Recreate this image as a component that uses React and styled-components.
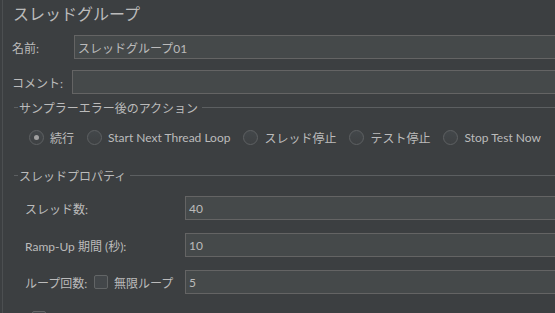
import React from 'react';
import styled, { createGlobalStyle } from 'styled-components';

const FONT = `Lato, "Noto Sans CJK JP", sans-serif`;

const Global = createGlobalStyle`
  html, body {
    margin: 0;
    padding: 0;
    background: #3c3f41;
    overflow: hidden;
  }
  body {
    font-family: ${FONT};
    color: #bbbbbb;
  }
`

const Page = styled.div`
  width: 555px;
  height: 313px;
  padding-left: 2px;
  box-sizing: border-box;
  overflow: hidden;
`
const Panel = styled.div`
  height: 100%;
  border-left: 1px solid #4c4f51;
  display: flex;
  flex-direction: column;
`
const Title = styled.h1`
  margin: 0;
  padding: 3px 0 0 10px;
  font-size: 16px;
  font-weight: 400;
  line-height: 22px;
  color: #bbbbbb;
`
const Row = styled.div`
  display: flex;
  align-items: center;
  height: 24px;
  margin-top: ${p => p.$top}px;
  padding-left: ${p => p.$left}px;
`
const Label = styled.label`
  width: ${p => p.$width}px;
  flex-shrink: 0;
  font-size: 12px;
  white-space: nowrap;
`
const Input = styled.input`
  flex: 1;
  height: 24px;
  margin-right: -20px;
  box-sizing: border-box;
  background: #45494a;
  border: 1px solid #646464;
  color: #bbbbbb;
  font-family: ${FONT};
  font-size: 12px;
  padding: 0 3px;
  outline: none;
`
const SectionHeader = styled.div`
  display: flex;
  align-items: center;
  height: 16px;
  margin-top: ${p => p.$top}px;
  padding-left: 11px;
  font-size: 12px;
  white-space: nowrap;
  &::before {
    content: "";
    width: 4px;
    height: 1px;
    background: #5c5f61;
    margin-right: 1px;
  }
  &::after {
    content: "";
    flex: 1;
    height: 1px;
    background: #5c5f61;
    margin-left: 4px;
  }
`
const RadioRow = styled.div`
  display: flex;
  align-items: center;
  height: 16px;
  margin-top: 14px;
  padding-left: 26px;
  gap: 13px;
  font-size: 12px;
  white-space: nowrap;
`
const RadioItem = styled.span`
  display: flex;
  align-items: center;
  gap: 6px;
`
const Circle = styled.span`
  width: 15px;
  height: 15px;
  box-sizing: border-box;
  border-radius: 50%;
  border: 1px solid #5e6163;
  background: linear-gradient(#43474a, #3e4143);
  display: flex;
  align-items: center;
  justify-content: center;
  &::after {
    content: "";
    width: 5px;
    height: 5px;
    border-radius: 50%;
    background: ${p => (p.$on ? '#a0a0a0' : 'transparent')};
  }
`
const Box = styled.span`
  width: 14px;
  height: 14px;
  box-sizing: border-box;
  border: 1px solid #626566;
  border-radius: 2px;
  background: #43474a;
  display: inline-flex;
  align-items: center;
  justify-content: center;
  flex-shrink: 0;
`
const CheckLabel = styled.span`
  display: flex;
  align-items: center;
  gap: 6px;
  font-size: 12px;
  white-space: nowrap;
`
const LoopLabel = styled.span`
  width: 69px;
  flex-shrink: 0;
  font-size: 12px;
  white-space: nowrap;
`
const LoopCheck = styled(CheckLabel)`
  width: 91px;
  flex-shrink: 0;
`

const options = [
  { text: '続行', on: true },
  { text: 'Start Next Thread Loop' },
  { text: 'スレッド停止' },
  { text: 'テスト停止' },
  { text: 'Stop Test Now' },
];

const Check = () => (
  <svg width="10" height="10" viewBox="0 0 10 10">
    <path d="M1.5 5.2 L4 7.6 L8.6 2" fill="none" stroke="#bbbbbb" strokeWidth="1.5" />
  </svg>
);

export default function App() {
  return (
    <Page>
      <Global />
      <Panel>
        <Title>スレッドグループ</Title>
        <Row $top={10} $left={9}>
          <Label $width={62}>名前:</Label>
          <Input defaultValue="スレッドグループ01" />
        </Row>
        <Row $top={11} $left={9}>
          <Label $width={60}>コメント:</Label>
          <Input defaultValue="" />
        </Row>
        <SectionHeader $top={5}>サンプラーエラー後のアクション</SectionHeader>
        <RadioRow>
          {options.map(o => (
            <RadioItem key={o.text}>
              <Circle $on={o.on} />
              {o.text}
            </RadioItem>
          ))}
        </RadioRow>
        <SectionHeader $top={22}>スレッドプロパティ</SectionHeader>
        <Row $top={13} $left={22}>
          <Label $width={160}>スレッド数:</Label>
          <Input defaultValue="40" />
        </Row>
        <Row $top={13} $left={22}>
          <Label $width={160}>Ramp-Up 期間 (秒):</Label>
          <Input defaultValue="10" />
        </Row>
        <Row $top={13} $left={22}>
          <LoopLabel>ループ回数:</LoopLabel>
          <LoopCheck>
            <Box />
            無限ループ
          </LoopCheck>
          <Input defaultValue="5" />
        </Row>
        <Row $top={16} $left={29}>
          <CheckLabel>
            <Box><Check /></Box>
            Same user on each iteration
          </CheckLabel>
        </Row>
      </Panel>
    </Page>
  );
}
